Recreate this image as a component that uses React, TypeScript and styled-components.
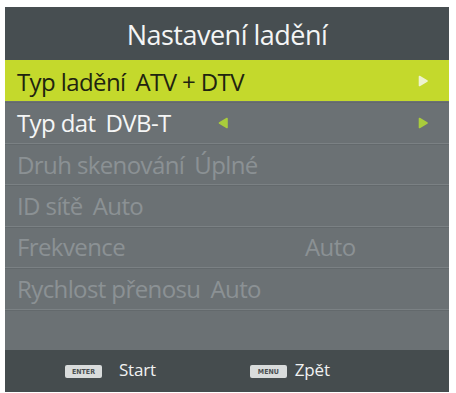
import styled, { createGlobalStyle } from "styled-components";

const GlobalStyle = createGlobalStyle`
  html, body {
    margin: 0;
    padding: 0;
    background: #ffffff;
  }
  body {
    font-family: "Open Sans", "Noto Sans", sans-serif;
  }
`;

type RowData = {
  label: string;
  value: string;
  active?: boolean;
  disabled?: boolean;
  labelWidth?: number;
  arrows?: "right" | "both";
};

const rows: RowData[] = [
  { label: "Typ ladění", value: "ATV + DTV", active: true, arrows: "right" },
  { label: "Typ dat", value: "DVB-T", arrows: "both" },
  { label: "Druh skenování", value: "Úplné", disabled: true },
  { label: "ID sítě", value: "Auto", disabled: true },
  { label: "Frekvence", value: "Auto", disabled: true, labelWidth: 288 },
  { label: "Rychlost přenosu", value: "Auto", disabled: true },
  { label: "", value: "" },
];

export default function App() {
  return (
    <>
      <GlobalStyle />
      <Screen>
        <Title>Nastavení ladění</Title>
        <List>
          {rows.map((r, i) => (
            <Row key={i} $active={r.active} $disabled={r.disabled}>
              <Label $width={r.labelWidth}>{r.label}</Label>
              <Value>{r.value}</Value>
              {r.arrows === "both" && (
                <LeftArrow>
                  <Arrow dir="left" color="#a9cc3c" />
                </LeftArrow>
              )}
              {r.arrows && (
                <RightArrow>
                  <Arrow dir="right" color={r.active ? "#eef3cf" : "#a9cc3c"} />
                </RightArrow>
              )}
            </Row>
          ))}
        </List>
        <Footer>
          <Hint>
            <Key>ENTER</Key>
            <HintText>Start</HintText>
          </Hint>
          <Hint>
            <Key>MENU</Key>
            <HintText $tight>Zpět</HintText>
          </Hint>
        </Footer>
      </Screen>
    </>
  );
}

function Arrow({ dir, color }: { dir: "left" | "right"; color: string }) {
  const d = dir === "right" ? "M1.5 1.5 L9 6 L1.5 10.5 Z" : "M9 1.5 L1.5 6 L9 10.5 Z";
  return (
    <svg width="11" height="12" viewBox="0 0 11 12">
      <path d={d} fill={color} stroke={color} strokeWidth="1.6" strokeLinejoin="round" />
    </svg>
  );
}

const Screen = styled.div`
  margin: 7px 0 0 5px;
  width: 444px;
  height: 385px;
  display: flex;
  flex-direction: column;
  background: #6b7174;
  overflow: hidden;
`;

const Title = styled.div`
  height: 53px;
  background: #474e51;
  color: #f4f5f5;
  font-size: 27px;
  letter-spacing: -0.5px;
  display: flex;
  align-items: center;
  justify-content: center;
  padding-top: 1px;
  box-sizing: border-box;
`;

const List = styled.div`
  height: 290px;
  display: flex;
  flex-direction: column;
`;

const Row = styled.div<{ $active?: boolean; $disabled?: boolean }>`
  flex: 1;
  position: relative;
  display: flex;
  align-items: center;
  padding-left: 12px;
  font-size: 24px;
  letter-spacing: -0.6px;
  background: ${(p) => (p.$active ? "#c4d92c" : "#6b7174")};
  color: ${(p) => (p.$active ? "#1f2410" : p.$disabled ? "#8b9194" : "#f5f6f6")};
  border-top: 1px solid ${(p) => (p.$active ? "#c4d92c" : "#7b8184")};
  box-shadow: ${(p) => (p.$active ? "none" : "inset 0 1px 0 #63696c")};
  &:nth-child(2) {
    border-top-color: #6b7174;
  }
`;

const Label = styled.span<{ $width?: number }>`
  ${(p) => (p.$width ? `width: ${p.$width}px;` : "margin-right: 10px;")}
`;

const Value = styled.span``;

const LeftArrow = styled.span`
  position: absolute;
  left: 213px;
  top: 50%;
  transform: translateY(-50%);
  display: flex;
`;

const RightArrow = styled.span`
  position: absolute;
  right: 20px;
  top: 50%;
  transform: translateY(-50%);
  display: flex;
`;

const Footer = styled.div`
  height: 42px;
  background: #454c4e;
  display: flex;
  align-items: center;
  padding-left: 60px;
  gap: 94px;
  padding-bottom: 4px;
  box-sizing: border-box;
`;

const Hint = styled.div`
  display: flex;
  align-items: center;
  gap: 17px;
`;

const Key = styled.span`
  width: 37px;
  height: 13px;
  background: #d9dcdc;
  border-radius: 2px;
  color: #4a4f51;
  font-family: "DejaVu Sans Condensed", "DejaVu Sans", sans-serif;
  font-size: 7px;
  font-weight: bold;
  display: flex;
  align-items: center;
  justify-content: center;
  margin-top: 5px;
`;

const HintText = styled.span<{ $tight?: boolean }>`
  color: #f1f2f2;
  font-size: 17px;
  letter-spacing: -0.2px;
  margin-left: ${(p) => (p.$tight ? "-9px" : "0")};
`;
